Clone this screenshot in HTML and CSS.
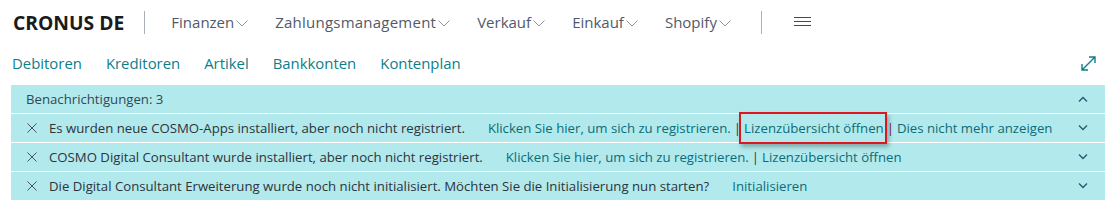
FILE: index.html
```html
<!DOCTYPE html>
<html lang="de">
<head>
<meta charset="utf-8">
<link rel="stylesheet" href="styles.css">
</head>
<body>
<header class="topbar">
  <div class="brand">CRONUS DE</div>
  <span class="vsep"></span>
  <nav class="menu">
    <span class="menu-item">Finanzen<svg class="chev" viewBox="0 0 12 7"><path d="M0.5 0.5 L6 6 L11.5 0.5" /></svg></span>
    <span class="menu-item menu-item-wide">Zahlungsmanagement<svg class="chev" viewBox="0 0 12 7"><path d="M0.5 0.5 L6 6 L11.5 0.5" /></svg></span>
    <span class="menu-item">Verkauf<svg class="chev" viewBox="0 0 12 7"><path d="M0.5 0.5 L6 6 L11.5 0.5" /></svg></span>
    <span class="menu-item">Einkauf<svg class="chev" viewBox="0 0 12 7"><path d="M0.5 0.5 L6 6 L11.5 0.5" /></svg></span>
    <span class="menu-item">Shopify<svg class="chev" viewBox="0 0 12 7"><path d="M0.5 0.5 L6 6 L11.5 0.5" /></svg></span>
  </nav>
  <span class="vsep vsep-right"></span>
  <svg class="burger" viewBox="0 0 17 10"><path d="M0 0.5 H17 M0 4.5 H17 M0 8.5 H17" /></svg>
</header>
<div class="navbar">
  <a class="nav-link">Debitoren</a>
  <a class="nav-link">Kreditoren</a>
  <a class="nav-link">Artikel</a>
  <a class="nav-link">Bankkonten</a>
  <a class="nav-link">Kontenplan</a>
  <svg class="expand" viewBox="0 0 15 15"><path d="M1 14 L14 1 M8 1 H14 V7 M1 8 V14 H7" /></svg>
</div>
<section class="panel">
  <div class="panel-head">
    <span class="head-text">Benachrichtigungen: 3</span>
    <svg class="toggle" viewBox="0 0 10 6"><path d="M1 5.5 L5 1.5 L9 5.5" /></svg>
  </div>
  <div class="note">
    <svg class="close" viewBox="0 0 11 11"><path d="M0.5 0.5 L10.5 10.5 M10.5 0.5 L0.5 10.5" /></svg>
    <span class="msg">Es wurden neue COSMO-Apps installiert, aber noch nicht registriert.</span>
    <span class="actions"><a class="act">Klicken Sie hier, um sich zu registrieren.</a><span class="pipe">|</span><a class="act marked">Lizenzübersicht öffnen</a><span class="pipe">|</span><a class="act">Dies nicht mehr anzeigen</a></span>
    <svg class="toggle" viewBox="0 0 10 6"><path d="M1 0.5 L5 4.5 L9 0.5" /></svg>
  </div>
  <div class="note">
    <svg class="close" viewBox="0 0 11 11"><path d="M0.5 0.5 L10.5 10.5 M10.5 0.5 L0.5 10.5" /></svg>
    <span class="msg">COSMO Digital Consultant wurde installiert, aber noch nicht registriert.</span>
    <span class="actions"><a class="act">Klicken Sie hier, um sich zu registrieren.</a><span class="pipe">|</span><a class="act">Lizenzübersicht öffnen</a></span>
    <svg class="toggle" viewBox="0 0 10 6"><path d="M1 0.5 L5 4.5 L9 0.5" /></svg>
  </div>
  <div class="note">
    <svg class="close" viewBox="0 0 11 11"><path d="M0.5 0.5 L10.5 10.5 M10.5 0.5 L0.5 10.5" /></svg>
    <span class="msg">Die Digital Consultant Erweiterung wurde noch nicht initialisiert. Möchten Sie die Initialisierung nun starten?</span>
    <span class="actions"><a class="act">Initialisieren</a></span>
    <svg class="toggle" viewBox="0 0 10 6"><path d="M1 0.5 L5 4.5 L9 0.5" /></svg>
  </div>
</section>
</body>
</html>
```
FILE: styles.css
```css
html, body {
  margin: 0;
  padding: 0;
  background: #ffffff;
}
body {
  font-family: "Open Sans", "Noto Sans", sans-serif;
  color: #212121;
  width: 1118px;
  height: 207px;
  overflow: hidden;
}
.topbar {
  display: flex;
  align-items: center;
  height: 44px;
  padding-left: 13px;
}
.brand {
  font-size: 19.3px;
  font-weight: 700;
  color: #1b1b1b;
}
.vsep {
  width: 1px;
  height: 23px;
  background: #a9afb6;
  margin: 0 26px 0 20px;
}
.vsep-right {
  margin: 0 32px 0 30px;
}
.menu {
  display: flex;
  gap: 27px;
}
.menu-item {
  display: flex;
  align-items: center;
  font-size: 15px;
  color: #505a6b;
}
.menu-item-wide {
  letter-spacing: 0.23px;
}
.chev {
  width: 12px;
  height: 7px;
  margin-left: 2px;
  margin-top: 2px;
  fill: none;
  stroke: #8f98a3;
  stroke-width: 1;
}
.burger {
  width: 17px;
  height: 10px;
  fill: none;
  stroke: #3d4a5c;
  stroke-width: 1.2;
}
.navbar {
  display: flex;
  align-items: center;
  height: 38px;
  padding-left: 12px;
  padding-right: 22px;
  gap: 24px;
}
.nav-link {
  font-size: 14.9px;
  color: #0a7f8c;
}
.expand {
  margin-left: auto;
  width: 15px;
  height: 15px;
  fill: none;
  stroke: #0e7e8f;
  stroke-width: 1.4;
}
.panel {
  margin: 3px 13px 0 11px;
  background: #b2e9ec;
  font-size: 13.2px;
  color: #2c343c;
}
.panel-head {
  display: flex;
  align-items: center;
  height: 28px;
  padding: 0 17px 0 15px;
  color: #2f4a55;
}
.head-text {
  flex: 1;
}
.note {
  display: flex;
  align-items: center;
  height: 28px;
  border-top: 1px solid #ffffff;
  padding: 0 17px 0 16px;
}
.close {
  width: 10px;
  height: 10px;
  fill: none;
  stroke: #4a5560;
  stroke-width: 1.1;
  margin-right: 12px;
}
.actions {
  flex: 1;
  margin-left: 23px;
}
.act {
  color: #0b6c78;
}
.pipe {
  color: #5e1f42;
  margin: 0 3px 0 3px;
}
.marked {
  position: relative;
}
.marked::after {
  content: "";
  position: absolute;
  left: -5px;
  right: -3px;
  top: -7px;
  bottom: -7px;
  border: 2px solid #e0161e;
  box-shadow: 2px 3px 4px rgba(40, 60, 60, 0.35);
}
.toggle {
  width: 10px;
  height: 6px;
  fill: none;
  stroke: #1f5a70;
  stroke-width: 1.3;
}
```
